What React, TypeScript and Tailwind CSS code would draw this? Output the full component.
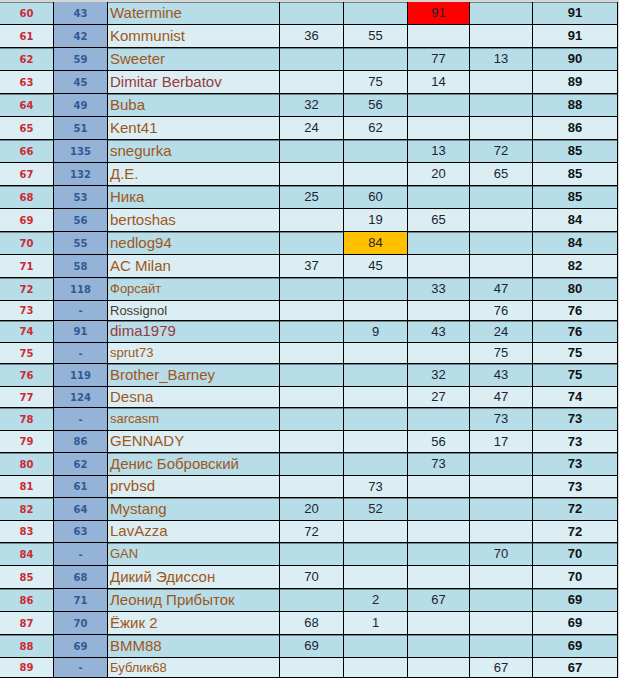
import React from 'react';

type Row = {
  rank: number;
  prev: string;
  name: string;
  vals: (number | null)[];
  total: number;
  h: string;
  small?: boolean;
  tone?: 'brown' | 'maroon' | 'dark';
  hot?: { col: number; color: 'red' | 'amber' };
};

const rows: Row[] = [
  { rank: 60, prev: '43', name: 'Watermine', vals: [null, null, 91, null], total: 91, h: 'h-[23px]', hot: { col: 2, color: 'red' } },
  { rank: 61, prev: '42', name: 'Kommunist', vals: [36, 55, null, null], total: 91, h: 'h-[23px]' },
  { rank: 62, prev: '59', name: 'Sweeter', vals: [null, null, 77, 13], total: 90, h: 'h-[23px]' },
  { rank: 63, prev: '45', name: 'Dimitar Berbatov', vals: [null, 75, 14, null], total: 89, h: 'h-[23px]', tone: 'maroon' },
  { rank: 64, prev: '49', name: 'Buba', vals: [32, 56, null, null], total: 88, h: 'h-[23px]' },
  { rank: 65, prev: '51', name: 'Kent41', vals: [24, 62, null, null], total: 86, h: 'h-[23px]' },
  { rank: 66, prev: '135', name: 'snegurka', vals: [null, null, 13, 72], total: 85, h: 'h-[23px]' },
  { rank: 67, prev: '132', name: 'Д.Е.', vals: [null, null, 20, 65], total: 85, h: 'h-[23px]' },
  { rank: 68, prev: '53', name: 'Ника', vals: [25, 60, null, null], total: 85, h: 'h-[23px]' },
  { rank: 69, prev: '56', name: 'bertoshas', vals: [null, 19, 65, null], total: 84, h: 'h-[23px]' },
  { rank: 70, prev: '55', name: 'nedlog94', vals: [null, 84, null, null], total: 84, h: 'h-[23px]', hot: { col: 1, color: 'amber' } },
  { rank: 71, prev: '58', name: 'AC Milan', vals: [37, 45, null, null], total: 82, h: 'h-[23px]' },
  { rank: 72, prev: '118', name: 'Форсайт', vals: [null, null, 33, 47], total: 80, h: 'h-[23px]', small: true },
  { rank: 73, prev: '-', name: 'Rossignol', vals: [null, null, null, 76], total: 76, h: 'h-[20px]', small: true, tone: 'dark' },
  { rank: 74, prev: '91', name: 'dima1979', vals: [null, 9, 43, 24], total: 76, h: 'h-[22px]', tone: 'maroon' },
  { rank: 75, prev: '-', name: 'sprut73', vals: [null, null, null, 75], total: 75, h: 'h-[21px]', small: true },
  { rank: 76, prev: '119', name: 'Brother_Barney', vals: [null, null, 32, 43], total: 75, h: 'h-[23px]' },
  { rank: 77, prev: '124', name: 'Desna', vals: [null, null, 27, 47], total: 74, h: 'h-[21px]' },
  { rank: 78, prev: '-', name: 'sarcasm', vals: [null, null, null, 73], total: 73, h: 'h-[23px]', small: true },
  { rank: 79, prev: '86', name: 'GENNADY', vals: [null, null, 56, 17], total: 73, h: 'h-[22px]' },
  { rank: 80, prev: '62', name: 'Денис Бобровский', vals: [null, null, 73, null], total: 73, h: 'h-[23px]' },
  { rank: 81, prev: '61', name: 'prvbsd', vals: [null, 73, null, null], total: 73, h: 'h-[22px]' },
  { rank: 82, prev: '64', name: 'Mystang', vals: [20, 52, null, null], total: 72, h: 'h-[23px]' },
  { rank: 83, prev: '63', name: 'LavAzza', vals: [72, null, null, null], total: 72, h: 'h-[22px]' },
  { rank: 84, prev: '-', name: 'GAN', vals: [null, null, null, 70], total: 70, h: 'h-[23px]', small: true },
  { rank: 85, prev: '68', name: 'Дикий Эдиссон', vals: [70, null, null, null], total: 70, h: 'h-[23px]' },
  { rank: 86, prev: '71', name: 'Леонид Прибыток', vals: [null, 2, 67, null], total: 69, h: 'h-[23px]' },
  { rank: 87, prev: '70', name: 'Ёжик 2', vals: [68, 1, null, null], total: 69, h: 'h-[23px]' },
  { rank: 88, prev: '69', name: 'BMM88', vals: [69, null, null, null], total: 69, h: 'h-[23px]' },
  { rank: 89, prev: '-', name: 'Бублик68', vals: [null, null, null, 67], total: 67, h: 'h-[20px]', small: true },
];

const valWidths = ['w-[64px]', 'w-[64px]', 'w-[62px]', 'w-[63px]'];

const nameColor = (tone?: Row['tone']) =>
  tone === 'maroon' ? 'text-[#9a3a3e]' : tone === 'dark' ? 'text-[#4a3b2c]' : 'text-[#a0561a]';

const App = () => {
  return (
    <div className="min-h-screen bg-[#d6d6d6] pt-[2px]">
      <div className="w-[618px] border-r border-black">
        {rows.map((r, i) => {
          const dark = i % 2 === 0;
          return (
            <div
              key={r.rank}
              className={`flex ${r.h} border-b border-black ${
                dark ? 'bg-[#b7dde8] shadow-[inset_0_1px_0_#6f858c]' : 'bg-[#daeef3]'
              }`}
            >
              {/* rank */}
              <div className="w-[54px] shrink-0 flex items-center justify-center border-r border-black font-['DejaVu_Sans',sans-serif] text-[10px] font-bold text-[#cc2a35]">
                {r.rank}
              </div>
              {/* previous place */}
              <div className="w-[54px] shrink-0 flex items-center justify-center border-r border-black bg-[#95b3d7] font-['DejaVu_Sans',sans-serif] text-[10px] font-bold text-[#2f5b94]">
                {r.prev}
              </div>
              {/* name */}
              <div
                className={`w-[172px] shrink-0 flex items-center pl-[2px] border-r border-black font-['Liberation_Sans',sans-serif] whitespace-nowrap overflow-hidden ${
                  r.small ? 'text-[13px]' : 'text-[15px]'
                } ${nameColor(r.tone)}`}
              >
                {r.name}
              </div>
              {r.vals.map((v, c) => {
                const hot = r.hot && r.hot.col === c;
                return (
                  <div
                    key={c}
                    className={`${valWidths[c]} shrink-0 flex items-center justify-center border-r border-black font-['Liberation_Sans',sans-serif] text-[13px] text-[#1c2530] ${
                      hot ? (r.hot!.color === 'red' ? 'bg-[#ff0000] shadow-none' : 'bg-[#ffc000]') : ''
                    }`}
                  >
                    {v ?? ''}
                  </div>
                );
              })}
              {/* total */}
              <div className="flex-1 flex items-center justify-center font-['Liberation_Sans',sans-serif] text-[13px] font-bold text-[#111]">
                {r.total}
              </div>
            </div>
          );
        })}
      </div>
    </div>
  );
};

export default App;
